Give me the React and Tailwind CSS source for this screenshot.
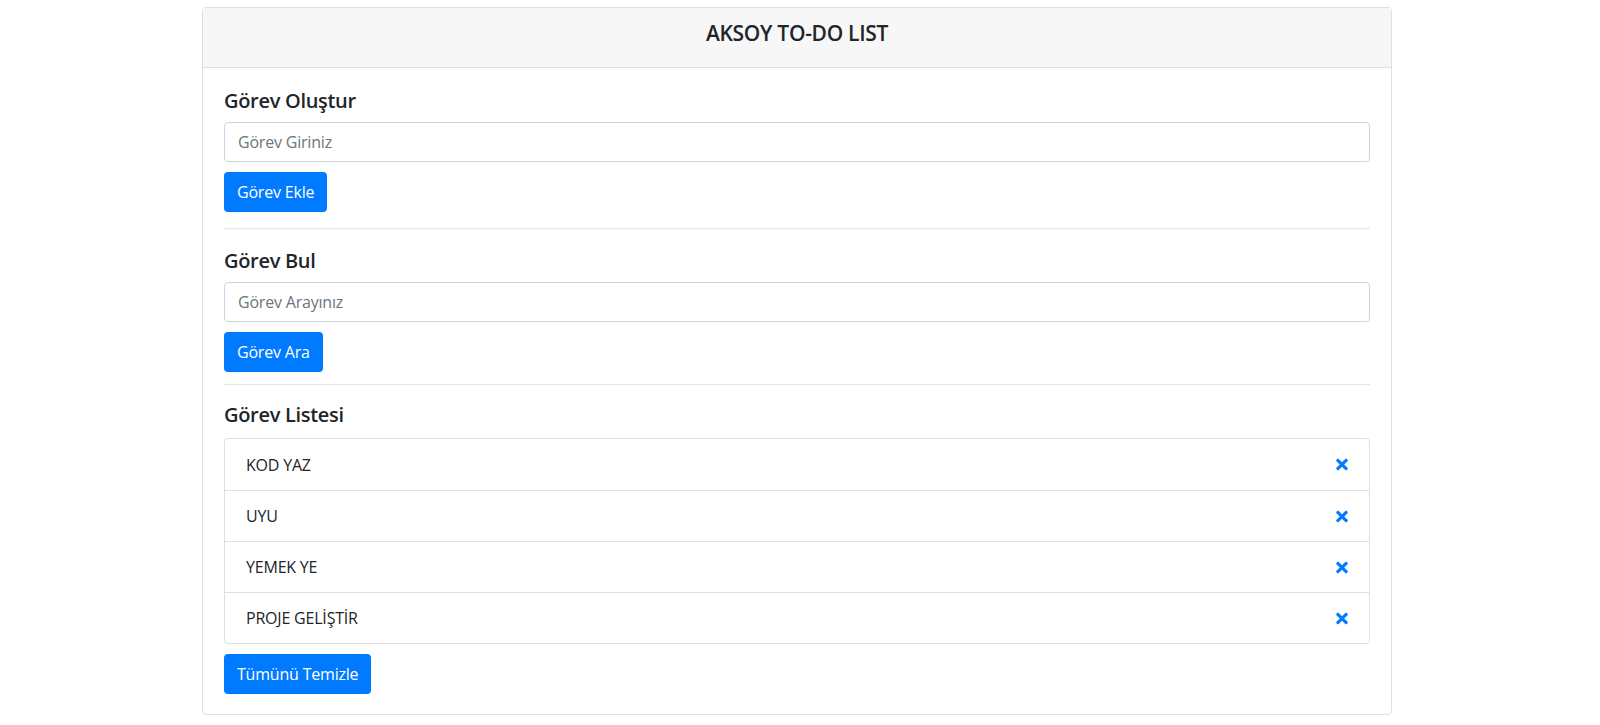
import { useState } from 'react'

const font = { fontFamily: '"Open Sans", "Noto Sans", Arial, sans-serif' }

function TimesIcon() {
  return (
    <svg viewBox="0 0 352 512" className="h-[17px] w-[12px] fill-[#007bff]">
      <path d="M242.72 256l100.07-100.07c12.28-12.28 12.28-32.19 0-44.48l-22.24-22.240c-12.28-12.28-32.19-12.28-44.48 0L176 189.28 75.93 89.21c-12.28-12.28-32.19-12.28-44.48 0L9.21 111.45c-12.28 12.28-12.28 32.19 0 44.48L109.28 256 9.21 356.07c-12.28 12.28-12.28 32.19 0 44.48l22.24 22.24c12.28 12.28 32.2 12.28 44.48 0L176 322.72l100.07 100.07c12.28 12.28 32.2 12.28 44.48 0l22.24-22.24c12.28-12.28 12.28-32.19 0-44.48L242.72 256z" />
    </svg>
  )
}

function Btn({ children, onClick }) {
  return (
    <button
      onClick={onClick}
      className="h-[40px] px-[13px] rounded-[4px] bg-[#007bff] text-white text-[16px] leading-[25px] tracking-[-0.2px]"
    >
      {children}
    </button>
  )
}

function Field({ placeholder, value, onChange }) {
  return (
    <input
      value={value}
      onChange={e => onChange(e.target.value)}
      placeholder={placeholder}
      className="block w-full h-[40px] px-[13px] rounded-[4px] border border-[#ced4da] text-[16px] text-[#495057] placeholder:text-[#6c757d] outline-none tracking-[-0.2px]"
    />
  )
}

export default function App() {
  const [todos, setTodos] = useState(['KOD YAZ', 'UYU', 'YEMEK YE', 'PROJE GELİŞTİR'])
  const [yeni, setYeni] = useState('')
  const [ara, setAra] = useState('')

  const ekle = () => {
    if (!yeni.trim()) return
    setTodos([...todos, yeni.trim()])
    setYeni('')
  }

  const liste = todos.filter(t => t.toLowerCase().includes(ara.toLowerCase()))

  return (
    <div className="min-h-[725px] bg-white text-[#212529]" style={font}>
      <div className="w-[1190px] ml-[202px] pt-[7px]">
        <div className="border border-[#dfdfdf] rounded-[4px]">
          <div className="h-[60px] bg-[#f7f7f7] border-b border-[#dfdfdf] flex items-start justify-center pt-[13px]">
            <h5 className="text-[21px] leading-[25px] font-semibold tracking-[-0.3px]">AKSOY TO-DO LIST</h5>
          </div>

          <div className="px-[21px] pt-[20px] pb-[20px]">
            <h5 className="text-[20px] leading-[25px] font-semibold mb-[9px] tracking-[-0.3px]">Görev Oluştur</h5>
            <Field placeholder="Görev Giriniz" value={yeni} onChange={setYeni} />
            <div className="mt-[10px]">
              <Btn onClick={ekle}>Görev Ekle</Btn>
            </div>

            <hr className="mt-[16px] mb-[19px] border-t border-[#e6e6e6]" />

            <h5 className="text-[20px] leading-[25px] font-semibold mb-[9px] tracking-[-0.3px]">Görev Bul</h5>
            <Field placeholder="Görev Arayınız" value={ara} onChange={setAra} />
            <div className="mt-[10px]">
              <Btn>Görev Ara</Btn>
            </div>

            <hr className="mt-[12px] mb-[17px] border-t border-[#e6e6e6]" />

            <h5 className="text-[20px] leading-[25px] font-semibold mb-[11px] tracking-[-0.3px]">Görev Listesi</h5>
            <ul className="border border-[#dfdfdf] rounded-[4px]">
              {liste.map((t, i) => (
                <li
                  key={t + i}
                  className={`h-[51px] px-[21px] flex items-center justify-between text-[16px] tracking-[-0.2px] ${i ? 'border-t border-[#dfdfdf]' : ''}`}
                >
                  <span>{t}</span>
                  <button onClick={() => setTodos(todos.filter(x => x !== t))}>
                    <TimesIcon />
                  </button>
                </li>
              ))}
            </ul>
            <div className="mt-[10px]">
              <Btn onClick={() => setTodos([])}>Tümünü Temizle</Btn>
            </div>
          </div>
        </div>
      </div>
    </div>
  )
}
